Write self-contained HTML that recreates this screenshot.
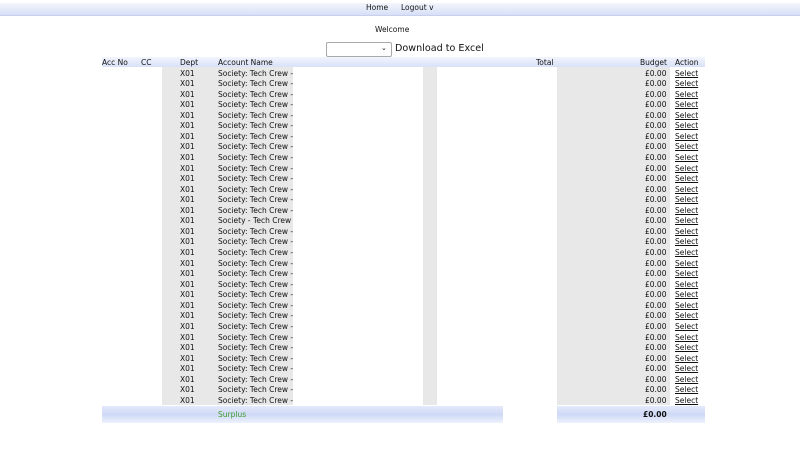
<!DOCTYPE html>
<html><head><style>
body{margin:0;width:800px;height:456px;background:#fff;font-family:"DejaVu Sans","Liberation Sans",sans-serif;font-size:7.5px;color:#111;position:relative;overflow:hidden}
.a{position:absolute;white-space:nowrap}
.nav{left:0;top:3px;width:800px;height:12px;background:linear-gradient(#f4f6fd,#d6dff7);border-bottom:1px solid #c8d0ee}
.hdr{left:102px;top:57px;width:603px;height:10px;background:linear-gradient(#f2f5fd,#d8e1f8)}
.ftr{left:102px;top:406px;width:603px;height:17px;background:linear-gradient(#e4eafb,#cfd9f6 50%,#eef2fc)}
.g{background:#e8e8e8}
.row{position:absolute;left:102px;width:603px;height:10.56px}
.row span{position:absolute;top:1px}
.row u{position:absolute;left:573px;top:1px}
</style></head><body>
<div class="a nav"></div>
<div class="a" style="left:366px;top:3px">Home</div>
<div class="a" style="left:401px;top:3px">Logout v</div>
<div class="a" style="left:375px;top:25px">Welcome</div>
<div class="a" style="left:326px;top:42px;width:64px;height:13px;border:1px solid #aaa;border-radius:2px;background:#fff"><span style="position:absolute;left:54px;top:1px;font-size:7px">⌄</span></div>
<div class="a" style="left:395px;top:43px;font-size:9.6px">Download to Excel</div>
<div class="a hdr"></div>
<div class="a g" style="left:162px;top:67px;width:131px;height:338px"></div>
<div class="a g" style="left:423px;top:67px;width:14px;height:338px"></div>
<div class="a g" style="left:557px;top:67px;width:113px;height:338px"></div>
<div class="a" style="left:102px;top:58px">Acc No</div>
<div class="a" style="left:141px;top:58px">CC</div>
<div class="a" style="left:180px;top:58px">Dept</div>
<div class="a" style="left:218px;top:58px">Account Name</div>
<div class="a" style="left:536px;top:58px">Total</div>
<div class="a" style="left:640px;top:58px">Budget</div>
<div class="a" style="left:675px;top:58px">Action</div>
<div id="rows"></div>
<div class="a ftr"></div>
<div class="a" style="left:503px;top:406px;width:54px;height:17px;background:#fff"></div>
<div class="a" style="left:218px;top:410px;color:#3a9a2a">Surplus</div>
<div class="a" style="left:643px;top:410px;font-weight:bold">£0.00</div>
<script>
var h='';for(var i=0;i<32;i++){var t=67.5+i*10.56;var n=(i==14)?'Society - Tech Crew':'Society: Tech Crew -';
h+='<div class="row" style="top:'+t+'px"><span style="left:78px">X01</span><span style="left:116px">'+n+'</span><span style="left:543px">£0.00</span><u>Select</u></div>';}
document.getElementById('rows').innerHTML=h;
</script>
</body></html>
